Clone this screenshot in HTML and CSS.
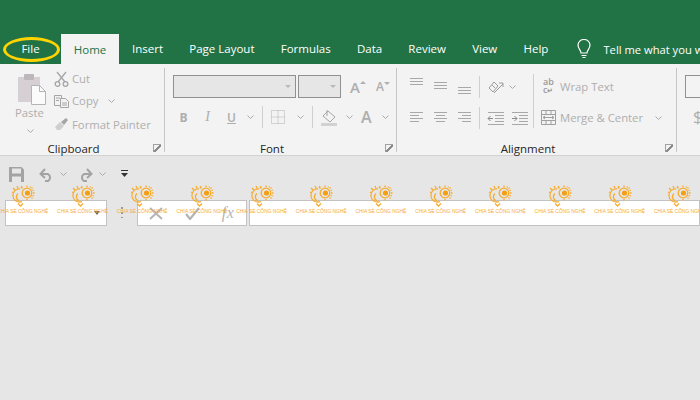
FILE: index.html
```html
<!DOCTYPE html>
<html lang="en">
<head>
<meta charset="utf-8">
<title>Excel ribbon</title>
<link rel="stylesheet" href="styles.css">
</head>
<body>
<svg class="defs" width="0" height="0">
  <symbol id="wm" viewBox="0 0 24 22">
    <g fill="none" stroke="#f7ab2e" stroke-width="1.300">
      <path d="M9 4a6.500 6.500 0 0 0-3 12.500q3 1 5 0M7 8.500a4 4 0 0 0 1 7M6 1l1 2M2 3l2 2M1 7l2 1M11 1l-1 2"/>
      <circle cx="16" cy="8" r="4.800"/>
      <path d="M16 0.500v1.500M23.500 8H22M21.500 2.500l-1 1M21.500 13.500l-1-1M10.500 2.500l1 1M16 14v1.500M19.500 1.500l-.5 1M23 5l-1.500.5M23 11l-1.500-.5" />
      <path d="M7 18.500l2.500 2.500 2.500-2.500" />
    </g>
    <circle cx="16.500" cy="8" r="2.600" fill="#f59f14"/>
  </symbol>
</svg>

<div class="app">
  <header class="titlebar"></header>

  <nav class="tabs">
    <span class="tab tab-file">File<i class="ring"></i></span>
    <span class="tab tab-active">Home</span>
    <span class="tab">Insert</span>
    <span class="tab">Page Layout</span>
    <span class="tab">Formulas</span>
    <span class="tab">Data</span>
    <span class="tab">Review</span>
    <span class="tab">View</span>
    <span class="tab">Help</span>
    <span class="tell">
      <svg width="16" height="20" viewBox="0 0 16 20" fill="none" stroke="#fff" stroke-width="1.2"><path d="M5 14c0-3-3-4-3-8a6 5.500 0 0 1 12 0c0 4-3 5-3 8z"/><path d="M5.500 16.500h5M6.500 18.500h3"/></svg>
      <span>Tell me what you want to do</span>
    </span>
  </nav>

  <section class="ribbon">
    <div class="group g-clip">
      <div class="group-body clip-body">
        <div class="paste">
          <svg width="30" height="32" viewBox="0 0 30 32"><rect x="1" y="4" width="22" height="25" fill="#d6d0d4"/><rect x="7" y="1" width="10" height="6" rx="1" fill="#bdb6bb"/><path d="M14.500 12.500h8l6 6v13h-14z" fill="#fbfbfb" stroke="#b4b4b4"/><path d="M22.500 12.500v6h6" fill="none" stroke="#b4b4b4"/></svg>
          <span class="t-dim">Paste</span>
          <svg class="chev" width="7" height="4" viewBox="0 0 7 4"><path d="M.5.500l3 3 3-3" fill="none" stroke="#aaa"/></svg>
        </div>
        <div class="clip-list">
          <div class="clip-row clip-first">
            <svg width="15" height="16" viewBox="0 0 15 16" fill="none" stroke="#a5a5a5" stroke-width="1.300"><path d="M3 1l8 10M12 1L4 11"/><circle cx="3.500" cy="13" r="2.300"/><circle cx="11.500" cy="13" r="2.300"/></svg>
            <span class="t-dim">Cut</span>
          </div>
          <div class="clip-row">
            <svg width="15" height="14" viewBox="0 0 15 14" fill="#f3f3f3" stroke="#a5a5a5"><path d="M.5 1.500h7v10h-7z"/><path d="M6.500 4.500h5l3 3v6h-8z"/><path d="M2 4h4M2 6.500h3M8 9h5M8 11h5" /></svg>
            <span class="t-dim">Copy</span>
            <svg class="copy-chev" width="7" height="4" viewBox="0 0 7 4"><path d="M.5.500l3 3 3-3" fill="none" stroke="#aaa"/></svg>
          </div>
          <div class="clip-row">
            <svg width="15" height="14" viewBox="0 0 15 14"><path d="M1 10l5-5 4 4-4 4H3z" fill="#cfcfcf"/><path d="M7 5l5-4 2 2-4 5z" fill="#a5a5a5"/></svg>
            <span class="t-dim">Format Painter</span>
          </div>
        </div>
      </div>
      <footer class="group-foot"><span>Clipboard</span><i class="launch"></i></footer>
    </div>

    <div class="group g-font">
      <div class="group-body font-body">
        <div class="font-row1">
          <div class="combo combo-name"><b class="caret"></b></div>
          <div class="combo combo-size"><b class="caret"></b></div>
          <span class="grow-a big">A<sup class="tri tri-up"></sup></span>
          <span class="grow-a small">A<sup class="tri tri-down"></sup></span>
        </div>
        <div class="font-row2">
          <b class="fi fi-b">B</b>
          <i class="fi fi-i">I</i>
          <u class="fi fi-u">U</u>
          <svg class="chev c1" width="7" height="4" viewBox="0 0 7 4"><path d="M.5.500l3 3 3-3" fill="none" stroke="#aaa"/></svg>
          <span class="vsep s1"></span>
          <svg class="bd" width="14" height="14" viewBox="0 0 14 14" fill="none" stroke="#b0b0b0" stroke-dasharray="1 1"><path d="M.5.500h13v13H.5zM7 .5v13M.5 7h13"/></svg>
          <svg class="chev c2" width="7" height="4" viewBox="0 0 7 4"><path d="M.5.500l3 3 3-3" fill="none" stroke="#aaa"/></svg>
          <span class="vsep s2"></span>
          <svg class="fill" width="17" height="17" viewBox="0 0 17 17"><path d="M7 2l7 6-5 5-7-6z" fill="#f3f3f3" stroke="#a5a5a5"/><path d="M6 1v6" stroke="#a5a5a5"/><rect y="14" width="16" height="3" fill="#d2d2d2"/></svg>
          <svg class="chev c3" width="7" height="4" viewBox="0 0 7 4"><path d="M.5.500l3 3 3-3" fill="none" stroke="#aaa"/></svg>
          <span class="font-a">A</span>
          <svg class="chev c4" width="7" height="4" viewBox="0 0 7 4"><path d="M.5.500l3 3 3-3" fill="none" stroke="#aaa"/></svg>
        </div>
      </div>
      <footer class="group-foot"><span>Font</span><i class="launch"></i></footer>
    </div>

    <div class="group g-align">
      <div class="group-body align-body">
        <div class="align-grid">
          <svg class="ai" width="15" height="8" viewBox="0 0 15 8" stroke="#a8a8a8"><path d="M1 .5h13M1 3.500h13M1 6.500h13"/></svg>
          <svg class="ai mid" width="15" height="8" viewBox="0 0 15 8" stroke="#a8a8a8"><path d="M1 .5h13M1 3.500h13M1 6.500h13"/></svg>
          <svg class="ai low" width="15" height="8" viewBox="0 0 15 8" stroke="#a8a8a8"><path d="M1 .5h13M1 3.500h13M1 6.500h13"/></svg>
          <span class="vsep grid-sep"></span>
          <span class="orient">
            <svg width="16" height="16" viewBox="0 0 16 16" fill="none" stroke="#9d9d9d"><path d="M1 9l5-6 4 4-5 6zM4 6l3 3M6 14l9-9M11 4h4v4" /></svg>
            <svg width="7" height="4" viewBox="0 0 7 4"><path d="M.5.500l3 3 3-3" fill="none" stroke="#aaa"/></svg>
          </span>
          <svg class="ai2" width="15" height="12" viewBox="0 0 15 12" stroke="#a8a8a8"><path d="M1 .5h13M1 3.500h9M1 6.500h13M1 9.500h9"/></svg>
          <svg class="ai2" width="15" height="12" viewBox="0 0 15 12" stroke="#a8a8a8"><path d="M1 .5h13M3 3.500h9M1 6.500h13M3 9.500h9"/></svg>
          <svg class="ai2" width="15" height="12" viewBox="0 0 15 12" stroke="#a8a8a8"><path d="M1 .5h13M5 3.500h9M1 6.500h13M5 9.500h9"/></svg>
          <span class="vsep grid-sep"></span>
          <span class="indents">
            <svg width="17" height="13" viewBox="0 0 17 13" stroke="#a8a8a8" fill="none"><path d="M1 .5h16M8 3.500h9M8 6.500h9M8 9.500h9M1 12.500h16"/><path d="M6 6.500H1M3.500 4L1 6.500 3.500 9" stroke="#8a8a8a"/></svg>
            <svg width="17" height="13" viewBox="0 0 17 13" stroke="#a8a8a8" fill="none"><path d="M1 .5h16M8 3.500h9M8 6.500h9M8 9.500h9M1 12.500h16"/><path d="M1 6.500h5M3.500 4L6 6.500 3.500 9" stroke="#8a8a8a"/></svg>
          </span>
        </div>
        <span class="vsep tall"></span>
        <div class="wrap-col">
          <div class="wrap-row">
            <span class="abc">ab<br>c<small>↵</small></span>
            <span class="t-dim">Wrap Text</span>
          </div>
          <div class="wrap-row">
            <svg width="15" height="15" viewBox="0 0 15 15" fill="none" stroke="#a0a0a0"><path d="M.5.500h14v14H.5zM.5 4.500h14M.5 10.500h14M5 .5v4M10 .5v4M5 10.500v4M10 10.500v4"/><path d="M2 7.500h11M4 6l-2 1.500L4 9M11 6l2 1.500L11 9"/></svg>
            <span class="t-dim">Merge &amp; Center</span>
            <svg class="merge-chev" width="7" height="4" viewBox="0 0 7 4"><path d="M.5.500l3 3 3-3" fill="none" stroke="#aaa"/></svg>
          </div>
        </div>
      </div>
      <footer class="group-foot"><span>Alignment</span><i class="launch"></i></footer>
    </div>

    <div class="group g-num">
      <div class="combo combo-num"></div>
      <span class="dollar">$</span>
    </div>
  </section>

  <section class="qat">
    <svg width="15" height="15" viewBox="0 0 15 15"><path d="M0 0h12.500L15 2.500V15H0z" fill="#a3a3a3"/><rect x="3" y="1.500" width="9" height="5" fill="#e6e6e6"/><rect x="3" y="9.500" width="9" height="5.500" fill="#e6e6e6"/></svg>
    <svg class="q-undo" width="15" height="15" viewBox="0 0 15 15" fill="none" stroke="#a3a3a3" stroke-width="2"><path d="M2 7h7a4 4 0 0 1 0 7H6"/><path d="M6 2L1.500 7 6 11"/></svg>
    <svg class="q-c" width="7" height="4" viewBox="0 0 7 4"><path d="M.5.500l3 3 3-3" fill="none" stroke="#aaa"/></svg>
    <svg class="q-redo" width="15" height="15" viewBox="0 0 15 15" fill="none" stroke="#a3a3a3" stroke-width="2"><path d="M13 7H6a4 4 0 0 0 0 7h3"/><path d="M9 2l4.500 5L9 11"/></svg>
    <svg class="q-c" width="7" height="4" viewBox="0 0 7 4"><path d="M.5.500l3 3 3-3" fill="none" stroke="#aaa"/></svg>
    <svg class="q-more" width="7" height="8" viewBox="0 0 7 8"><path d="M0 .5h7" stroke="#333"/><path d="M0 3h7L3.500 7z" fill="#333"/></svg>
  </section>

  <section class="fbar">
    <div class="name-box"><b class="name-caret"></b></div>
    <span class="dots"></span>
    <div class="fx-box">
      <svg width="14" height="13" viewBox="0 0 14 13" stroke="#b4b4b4" stroke-width="2"><path d="M1 1l12 11M13 1L1 12"/></svg>
      <svg class="fx-check" width="15" height="13" viewBox="0 0 15 13" fill="none" stroke="#b4b4b4" stroke-width="2.200"><path d="M1 7l4 5 9-11"/></svg>
      <span class="fx">fx</span>
    </div>
    <div class="formula-input"></div>
  </section>

  <div class="watermarks">
    <div class="wm"><svg width="24" height="22"><use href="#wm"/></svg><span>CHIA SẺ CÔNG NGHỆ</span></div>
    <div class="wm"><svg width="24" height="22"><use href="#wm"/></svg><span>CHIA SẺ CÔNG NGHỆ</span></div>
    <div class="wm"><svg width="24" height="22"><use href="#wm"/></svg><span>CHIA SẺ CÔNG NGHỆ</span></div>
    <div class="wm"><svg width="24" height="22"><use href="#wm"/></svg><span>CHIA SẺ CÔNG NGHỆ</span></div>
    <div class="wm"><svg width="24" height="22"><use href="#wm"/></svg><span>CHIA SẺ CÔNG NGHỆ</span></div>
    <div class="wm"><svg width="24" height="22"><use href="#wm"/></svg><span>CHIA SẺ CÔNG NGHỆ</span></div>
    <div class="wm"><svg width="24" height="22"><use href="#wm"/></svg><span>CHIA SẺ CÔNG NGHỆ</span></div>
    <div class="wm"><svg width="24" height="22"><use href="#wm"/></svg><span>CHIA SẺ CÔNG NGHỆ</span></div>
    <div class="wm"><svg width="24" height="22"><use href="#wm"/></svg><span>CHIA SẺ CÔNG NGHỆ</span></div>
    <div class="wm"><svg width="24" height="22"><use href="#wm"/></svg><span>CHIA SẺ CÔNG NGHỆ</span></div>
    <div class="wm"><svg width="24" height="22"><use href="#wm"/></svg><span>CHIA SẺ CÔNG NGHỆ</span></div>
    <div class="wm"><svg width="24" height="22"><use href="#wm"/></svg><span>CHIA SẺ CÔNG NGHỆ</span></div>
  </div>
</div>
</body>
</html>
```

FILE: styles.css
```css
* { box-sizing: border-box; }
html, body { margin: 0; padding: 0; }
body { width: 700px; height: 400px; overflow: hidden; background: #e6e6e6; font-family: "Open Sans", "Noto Sans", sans-serif; font-size: 12px; color: #333; }
.defs { position: absolute; }
svg { display: block; flex: none; }
.app { position: relative; width: 700px; height: 400px; overflow: hidden; }

.titlebar { height: 34px; background: #217346; }

.tabs { display: flex; height: 30px; background: #217346; color: #fff; font-size: 11.500px; white-space: nowrap; overflow: hidden; }
.tab { flex: none; display: flex; align-items: center; padding: 0 13.100px 1px; }
.tab-file { position: relative; width: 61px; justify-content: center; padding: 0 0 1px; }
.ring { position: absolute; left: 3px; top: 3px; width: 57px; height: 25px; border: 3px solid #ffd400; border-radius: 50%; }
.tab-active { width: 58px; justify-content: center; padding: 0; background: #f3f3f3; color: #217346; }
.tell { flex: none; display: flex; align-items: center; gap: 11px; margin-left: 15px; font-size: 11.200px; }

.ribbon { display: flex; height: 92px; background: #f3f3f3; border-bottom: 1px solid #d2d2d2; }
.group { display: flex; flex-direction: column; flex: none; padding-top: 4px; height: 91px; background: linear-gradient(#c6c6c6, #c6c6c6) right 4px / 1px 84px no-repeat; }
.g-clip { width: 165px; }
.g-font { width: 232px; }
.g-align { width: 280px; }
.g-num { background: none; flex: 1; padding: 11px 0 0 8px; display: block; overflow: hidden; }
.group-body { flex: 1; display: flex; min-height: 0; }
.group-foot { position: relative; height: 14px; flex: none; padding-right: 18px; display: flex; justify-content: center; align-items: center; font-size: 11.500px; color: #262626; }
.launch { position: absolute; right: 4px; top: 3px; width: 8px; height: 8px; border: 1px solid #a0a0a0; border-width: 1px 0 0 1px; background: linear-gradient(135deg, transparent 42%, #8a8a8a 42%, #8a8a8a 58%, transparent 58%); }
.t-dim { color: #aeaeae; font-size: 11.300px; }

.clip-body { padding-left: 14px; }
.paste { width: 40px; display: flex; flex-direction: column; align-items: flex-start; padding-top: 5px; padding-left: 3px; }
.paste .t-dim { margin: 0 0 0 -2px; }
.paste .chev { margin: 9px 0 0 10px; }
.clip-list { display: flex; flex-direction: column; }
.clip-row { display: flex; align-items: center; gap: 3px; height: 23.500px; flex: none; }
.clip-first { height: 21px; }
.copy-chev { margin-left: 7px; }

.font-body { flex-direction: column; padding: 7px 0 0 8px; }
.font-row1 { display: flex; align-items: center; }
.combo { height: 23px; flex: none; background: #e6e6e6; border: 1px solid #909090; display: flex; align-items: center; justify-content: flex-end; padding-right: 4px; }
.combo-name { width: 123px; }
.combo-size { width: 43px; margin-left: 2px; }
.combo-num { width: 60px; background: #f3f3f3; }
.caret { width: 0; height: 0; border: 3px solid transparent; border-top-color: #b8b8b8; border-bottom: 0; }
.grow-a { display: flex; color: #aeaeae; font-weight: 600; }
.grow-a.big { margin-left: 9px; font-size: 15px; width: 26px; }
.grow-a.small { font-size: 12px; width: 16px; }
.tri { width: 0; height: 0; margin-top: 4px; border: 3px solid transparent; }
.tri-up { border-bottom-color: #b0b0b0; border-top: 0; }
.tri-down { border-top-color: #b0b0b0; border-bottom: 0; }
.font-row2 { display: flex; align-items: center; height: 22px; margin-top: 8px; color: #aeaeae; }
.fi { font-size: 12px; font-family: "Open Sans", sans-serif; color: #aeaeae; text-align: center; flex: none; }
.fi-b { margin-left: 6px; width: 9px; font-weight: 700; }
.fi-i { margin-left: 15px; width: 9px; font-family: "Liberation Serif", serif; font-size: 14px; }
.fi-u { margin-left: 15px; width: 9px; font-weight: 600; }
.chev { flex: none; }
.c1 { margin-left: 11px; }
.vsep { display: block; width: 1px; height: 22px; background: #cfcfcf; flex: none; }
.s1 { margin-left: 8px; }
.bd { margin-left: 8px; }
.c2 { margin-left: 12px; }
.s2 { margin-left: 8px; }
.fill { margin-left: 8px; }
.c3 { margin-left: 8px; }
.font-a { margin-left: 8px; font-size: 16px; font-weight: 600; width: 12px; }
.c4 { margin-left: 9px; }

.align-body { padding: 4px 0 0 12px; }
.align-grid { display: grid; grid-template-columns: 15px 15px 15px 1px auto; column-gap: 9px; grid-template-rows: 30px 32px; align-items: center; justify-items: start; width: 124px; flex: none; }
.ai { align-self: start; margin-top: 6px; }
.ai.mid { margin-top: 10px; }
.ai.low { margin-top: 15px; }
.grid-sep { margin-left: -2px; }
.orient { display: flex; align-items: center; gap: 5px; margin-left: -3px; }
.indents { display: flex; gap: 7px; margin-left: -4px; }
.vsep.tall { height: 54px; margin: 2px 6px 0 0; }
.wrap-col { display: flex; flex-direction: column; padding-left: 1px; }
.wrap-row { display: flex; align-items: center; gap: 4px; height: 28px; white-space: nowrap; }
.wrap-row + .wrap-row { height: 31px; margin-top: 2px; }
.abc { width: 15px; color: #9a9a9a; font-size: 9px; line-height: 8px; font-weight: 600; padding-left: 2px; }
.abc small { font-size: 7px; }
.merge-chev { margin-left: 8px; }
.dollar { display: block; margin-top: 7px; margin-left: 8px; font-size: 17px; color: #aeaeae; }

.qat { display: flex; align-items: center; height: 34px; padding: 2px 0 0 9px; }
.q-undo { margin-left: 15px; }
.q-redo { margin-left: 11px; }
.q-c { margin-left: 6px; }
.q-more { margin-left: 15px; }

.fbar { display: flex; height: 26px; margin-top: 10px; padding-left: 5px; }
.name-box { width: 102px; background: #fff; border: 1px solid #c3c3c3; display: flex; align-items: center; justify-content: flex-end; padding-right: 6px; }
.name-caret { width: 0; height: 0; border: 3.500px solid transparent; border-top: 4px solid #666; border-bottom: 0; }
.dots { width: 2px; height: 11px; margin: 7px 14px 0 14px; background: repeating-linear-gradient(#999 0 2px, transparent 2px 5px); }
.fx-box { width: 110px; background: #fff; border: 1px solid #c3c3c3; display: flex; align-items: center; padding-left: 11px; }
.fx-check { margin-left: 22px; }
.fx { margin-left: 22px; font-family: "Liberation Serif", serif; font-style: italic; font-size: 16px; letter-spacing: 0.500px; color: #b4b4b4; }
.formula-input { width: 452px; margin-left: 2px; background: #fff; border: 1px solid #c3c3c3; }

.watermarks { position: absolute; left: -7px; top: 185px; display: flex; pointer-events: none; }
.wm { width: 59.700px; flex: none; display: flex; flex-direction: column; align-items: center; }
.wm span { font-family: "Liberation Sans", sans-serif; font-size: 4.900px; line-height: 8px; margin-top: 1px; color: #f7ab2e; white-space: nowrap; }
```
